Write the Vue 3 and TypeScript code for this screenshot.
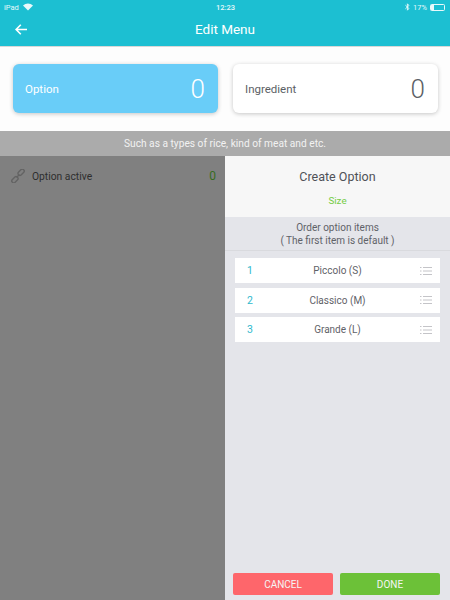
<script setup lang="ts">
const items = [
  { n: 1, label: 'Piccolo (S)' },
  { n: 2, label: 'Classico (M)' },
  { n: 3, label: 'Grande (L)' },
]
</script>

<template>
  <div class="page">
    <header class="top">
      <div class="status">
        <div class="st-left">
          <span>iPad</span>
          <svg width="10" height="8" viewBox="0 0 10 8"><path d="M5 7.6 0 2.6C2.8-.2 7.2-.2 10 2.6Z" fill="#e8f9fb" /></svg>
        </div>
        <span class="st-time">12:23</span>
        <div class="st-right">
          <svg width="5" height="8" viewBox="0 0 5 8" fill="none" stroke="#e8f9fb" stroke-width="0.9"><path d="M.4 2.2 4 5.5 2.4 7.2V.8L4 2.5.4 5.8" /></svg>
          <span>17%</span>
          <span class="battery"><span class="battery-fill"></span></span>
        </div>
      </div>
      <div class="nav">
        <svg class="back" width="12" height="11" viewBox="0 0 12 11" fill="none" stroke="#fff" stroke-width="1.6"><path d="M12 5.5H1.2M5.8.8 1.1 5.5l4.7 4.7" /></svg>
        <span class="nav-title">Edit Menu</span>
      </div>
    </header>

    <section class="cards">
      <div class="card active">
        <span class="card-label">Option</span>
        <span class="card-num">0</span>
      </div>
      <div class="card">
        <span class="card-label">Ingredient</span>
        <span class="card-num">0</span>
      </div>
    </section>

    <div class="hint">Such as a types of rice, kind of meat and etc.</div>

    <main class="split">
      <aside class="left">
        <div class="left-row">
          <svg width="14" height="14" viewBox="0 0 14 14" fill="none" stroke="#636363" stroke-width="1.4">
            <rect x="6.6" y="1.3" width="7" height="3.8" rx="1.6" transform="rotate(-45 10.100 3.200)" />
            <rect x="0.4" y="8.900" width="7" height="3.8" rx="1.6" transform="rotate(-45 3.900 10.800)" />
            <path d="M5.6 8.400 8.400 5.600" />
          </svg>
          <span class="left-label">Option active</span>
          <span class="left-count">0</span>
        </div>
      </aside>

      <section class="right">
        <div class="right-head">
          <div class="right-title">Create Option</div>
          <div class="right-sub">Size</div>
        </div>
        <div class="order-head">
          <div>Order option items</div>
          <div>( The first item is default )</div>
        </div>
        <div class="list">
          <div v-for="item in items" :key="item.n" class="row">
            <span class="row-num">{{ item.n }}</span>
            <span class="row-label">{{ item.label }}</span>
            <svg class="row-icon" width="12" height="8" viewBox="0 0 12 8" stroke="#c4c4c8" stroke-width="1" fill="none">
              <path d="M0 .5h1.500M3 .5h9M0 4h1.500M3 4h9M0 7.500h1.500M3 7.500h9" />
            </svg>
          </div>
        </div>
        <div class="actions">
          <button class="btn cancel">CANCEL</button>
          <button class="btn done">DONE</button>
        </div>
      </section>
    </main>
  </div>
</template>

<style>
html, body { margin: 0; padding: 0; }
</style>

<style scoped>
.page {
  width: 450px;
  height: 600px;
  display: flex;
  flex-direction: column;
  overflow: hidden;
  background: #fff;
  font-family: Roboto, "Liberation Sans", sans-serif;
}
.top {
  height: 46px;
  flex: none;
  background: #1cbfd2;
  color: #fff;
  border-bottom: 1px solid #d8d8d8;
}
.status {
  height: 12px;
  padding: 1px 3px 0 4px;
  display: grid;
  grid-template-columns: 1fr auto 1fr;
  align-items: center;
  font-size: 7.500px;
  color: #e8f9fb;
}
.st-left { display: flex; align-items: center; gap: 4px; }
.st-time { font-weight: 500; }
.st-right { display: flex; align-items: center; justify-content: flex-end; gap: 3px; }
.battery {
  width: 13px;
  height: 5px;
  border: 0.5px solid #e8f9fb;
  border-radius: 1.5px;
  display: block;
  margin-right: 2px;
}
.battery-fill { display: block; width: 3px; height: 100%; background: #e8f9fb; }
.nav {
  height: 33px;
  position: relative;
  display: flex;
  align-items: center;
  justify-content: center;
}
.back { position: absolute; left: 15px; top: 11px; }
.nav-title { font-size: 13.500px; font-weight: 400; position: relative; top: -1px; }
.cards {
  height: 84px;
  flex: none;
  box-sizing: border-box;
  padding: 17px 12px 18px 13px;
  display: flex;
  gap: 15px;
  background: #fdfdfd;
}
.card {
  flex: 1;
  border-radius: 6px;
  background: #fff;
  box-shadow: 0 1px 4px rgba(0, 0, 0, 0.22);
  display: flex;
  align-items: center;
  justify-content: space-between;
  padding: 0 13px 0 12px;
  color: #5c5f66;
}
.card.active { background: #69cdf8; color: #fff; }
.card-label { font-size: 11.500px; }
.card-num { font-size: 26px; font-weight: 300; }
.hint {
  height: 25px;
  flex: none;
  background: #ababab;
  color: #f2f2f2;
  font-size: 10.200px;
  display: flex;
  align-items: center;
  justify-content: center;
}
.split { flex: 1; display: flex; min-height: 0; }
.left { width: 225px; flex: none; background: #808080; }
.left-row {
  height: 40px;
  box-sizing: border-box;
  padding: 0 9px 0 11px;
  display: flex;
  align-items: center;
  gap: 7px;
}
.left-label { flex: 1; font-size: 10.300px; color: #2e2e2e; }
.left-count { font-size: 12px; color: #366b1f; }
.right {
  flex: 1;
  display: flex;
  flex-direction: column;
  background: #e4e5ea;
}
.right-head {
  height: 61px;
  flex: none;
  background: #f7f7f7;
  text-align: center;
  box-sizing: border-box;
  padding-top: 13px;
}
.right-title { font-size: 12.500px; line-height: 16px; color: #4f5258; }
.right-sub { font-size: 9.800px; line-height: 12px; margin-top: 10px; color: #76cc45; }
.order-head {
  height: 34px;
  flex: none;
  box-sizing: border-box;
  border-bottom: 1px solid #d9dade;
  text-align: center;
  font-size: 10px;
  line-height: 13px;
  color: #5f6268;
  padding-top: 4px;
}
.list {
  flex: 1;
  padding: 7px 10px 0;
  display: flex;
  flex-direction: column;
  gap: 4.500px;
}
.row {
  height: 25px;
  background: #fff;
  display: grid;
  grid-template-columns: 30px 1fr 30px;
  align-items: center;
  font-size: 10px;
  color: #5f6268;
}
.row-num { font-size: 10.500px; color: #2fb9cd; padding-left: 12px; }
.row-label { text-align: center; }
.row-icon { justify-self: end; margin-right: 8px; }
.actions {
  flex: none;
  display: flex;
  gap: 7px;
  padding: 0 10px 5px 8px;
}
.btn {
  flex: 1;
  height: 22px;
  border: 0;
  padding: 0;
  border-radius: 2px;
  color: #f5f5f5;
  font-family: inherit;
  font-size: 10px;
}
.cancel { background: #fe666b; }
.done { background: #6cc138; }
</style>
